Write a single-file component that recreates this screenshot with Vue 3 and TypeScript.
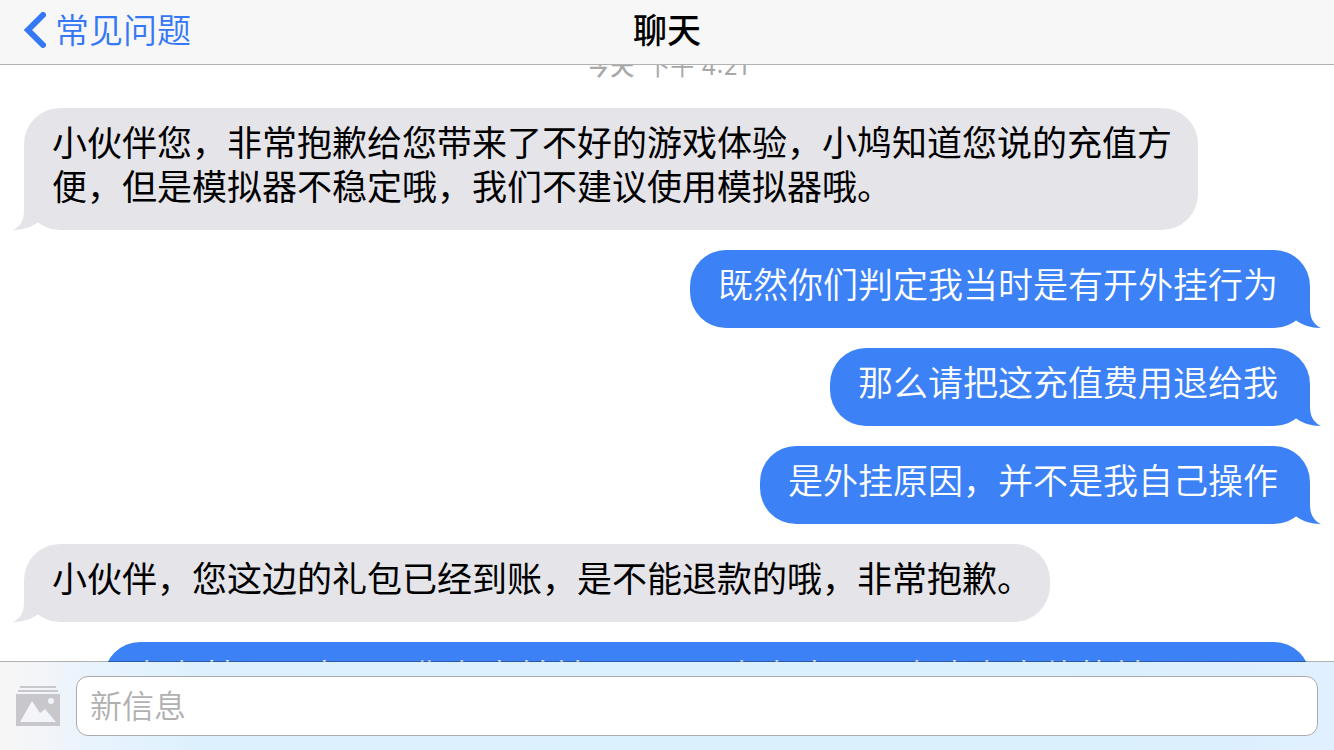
<script setup lang="ts">
import { ref } from 'vue'

interface Message {
  id: number
  from: 'support' | 'me'
  text: string
}

const draft = ref('')

const messages: Message[] = [
  { id: 1, from: 'support', text: '小伙伴您，非常抱歉给您带来了不好的游戏体验，小鸠知道您说的充值方便，但是模拟器不稳定哦，我们不建议使用模拟器哦。' },
  { id: 2, from: 'me', text: '既然你们判定我当时是有开外挂行为' },
  { id: 3, from: 'me', text: '那么请把这充值费用退给我' },
  { id: 4, from: 'me', text: '是外挂原因，并不是我自己操作' },
  { id: 5, from: 'support', text: '小伙伴，您这边的礼包已经到账，是不能退款的哦，非常抱歉。' },
  { id: 6, from: 'me', text: '在有其，一方面，你在官并并，而且，在有官，一在官在充值的并，一一，不给退还给我' },
]
</script>

<template>
  <div class="screen">
    <header class="bar">
      <a class="back" href="#faq">
        <svg class="chevron" viewBox="0 0 22 36" aria-hidden="true">
          <path d="M19 3 L4 18 L19 33" />
        </svg>
        <span>常见问题</span>
      </a>
      <h1 class="title">聊天</h1>
    </header>

    <main class="chat">
      <time class="stamp"><b>今天</b>&ensp;下午 4:21</time>
      <div class="list">
        <div v-for="m in messages" :key="m.id" class="bubble" :class="m.from">
          <svg class="tail" viewBox="0 0 28 40" aria-hidden="true">
            <path d="M0 30 L4 33 C10 37 17 40 28 40 C20 36 17 30 17 20 L17 0 L0 0 Z" />
          </svg>
          <p class="text">{{ m.text }}</p>
        </div>
      </div>
    </main>

    <form class="composer" @submit.prevent>
      <button class="photo" type="button" aria-label="照片">
        <svg viewBox="0 0 44 40" aria-hidden="true">
          <path
            fill-rule="evenodd"
            d="M4 0H40V2H4ZM2 4H42V6H2ZM0 8H44V40H0ZM4 36H40L29 23L24 27L16 15ZM32 15A3 3 0 1 0 38 15A3 3 0 1 0 32 15Z"
          />
        </svg>
      </button>
      <input v-model="draft" class="field" type="text" placeholder="新信息" aria-label="新信息" />
    </form>
  </div>
</template>

<style>
body {
  margin: 0;
  background: #fff;
}
</style>

<style scoped>
.screen {
  display: flex;
  flex-direction: column;
  height: 100vh;
  overflow: hidden;
  background: #fff;
  font-family: "Noto Sans CJK SC", sans-serif;
  color: #000;
}

.bar {
  flex: none;
  display: grid;
  grid-template-columns: 1fr auto 1fr;
  align-items: center;
  height: 64px;
  padding: 0 24px;
  background: #f7f7f7;
  border-bottom: 1px solid #b2b2b2;
}

.back {
  display: flex;
  align-items: center;
  gap: 9px;
  padding-bottom: 4px;
  color: #3478f6;
  font-size: 34px;
  font-weight: 350;
  line-height: 42px;
  text-decoration: none;
}

.chevron {
  width: 22px;
  height: 36px;
  fill: none;
  stroke: currentColor;
  stroke-width: 6;
  stroke-linecap: round;
  stroke-linejoin: miter;
}

.title {
  margin: 0;
  padding-bottom: 6px;
  font-size: 34px;
  line-height: 42px;
  font-weight: 500;
}

.back span {
  padding-bottom: 2px;
}

.chat {
  flex: 1;
  min-height: 0;
  overflow: hidden;
}

.stamp {
  display: block;
  margin-top: -14px;
  margin-bottom: 25px;
  color: #a8a8a8;
  font-family: Inter, "Noto Sans CJK SC", sans-serif;
  font-size: 24px;
  line-height: 32px;
  text-align: center;
}

.stamp b {
  font-weight: 500;
}

.list {
  display: flex;
  flex-direction: column;
  gap: 20px;
  padding: 0 24px;
}

.bubble {
  position: relative;
  box-sizing: border-box;
  padding: 11px 32px 23px 28px;
  border-radius: 36px;
  font-size: 35px;
  line-height: 44px;
}

.support {
  align-self: flex-start;
  max-width: 1174px;
  padding-right: 18px;
  background: #e5e4e9;
  color: #000;
}

.me {
  align-self: flex-end;
  max-width: 1206px;
  background: #3c82f6;
  color: #fff;
  font-weight: 350;
}

.text {
  margin: 0;
}

.tail {
  position: absolute;
  bottom: 0;
  width: 28px;
  height: 40px;
}

.me .tail {
  right: -11px;
  fill: #3c82f6;
}

.support .tail {
  left: -11px;
  fill: #e5e4e9;
  transform: scaleX(-1);
}

.composer {
  position: relative;
  flex: none;
  display: flex;
  align-items: center;
  gap: 16px;
  margin-top: -1px;
  padding: 14px 16px;
  border-top: 1px solid rgba(0, 0, 0, 0.3);
  background: linear-gradient(90deg, #f6f6f6 0, #f3f5f9 40px, #e9f3fd 90px, #dcf1fd 200px, #daf0fd 80%, #dceffe 92%, #e1f0ff 100%) padding-box;
}

.photo {
  flex: none;
  width: 44px;
  height: 40px;
  padding: 0;
  border: 0;
  background: none;
}

.photo svg {
  display: block;
  width: 44px;
  height: 40px;
  fill: #c7c7cc;
}

.field {
  flex: 1;
  min-width: 0;
  box-sizing: border-box;
  height: 60px;
  padding: 0 13px 4px;
  border: 1px solid #a9abad;
  border-radius: 12px;
  outline: 0;
  background: #fff;
  color: #000;
  font-family: inherit;
  font-size: 32px;
  font-weight: 350;
}

.field::placeholder {
  color: #b0b0b0;
  opacity: 1;
}
</style>
